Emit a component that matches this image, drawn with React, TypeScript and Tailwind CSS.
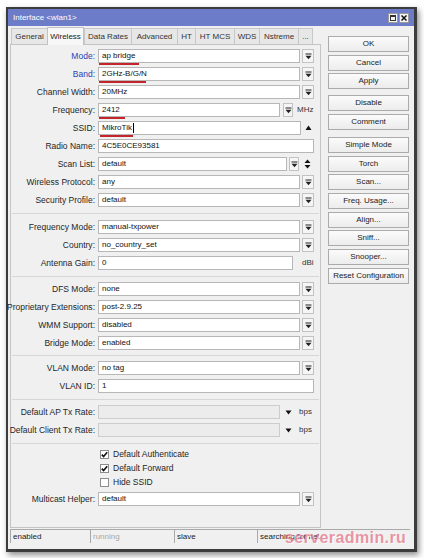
import React from 'react';

const DropIcon = () => (
  <svg width="7" height="7" viewBox="0 0 7 7">
    <rect x="0.5" y="0.5" width="6" height="1" fill="#222" />
    <path d="M0.5 2.8h6L3.5 6.2z" fill="#222" />
  </svg>
);

function Box({
  className,
  value,
  underline,
  caret,
  disabled,
}: {
  className: string;
  value?: string;
  underline?: string;
  caret?: boolean;
  disabled?: boolean;
}) {
  return (
    <div
      className={`relative flex h-[14px] shrink-0 items-center border px-[3px] text-[8px] text-[#111] ${
        disabled ? 'border-[#cdcdcd] bg-[#ececec]' : 'border-[#b7b7b7] bg-white'
      } ${className}`}
    >
      <span className="leading-none">{value}</span>
      {caret && <span className="ml-[1px] h-[10px] w-px bg-black" />}
      {underline && <div className={`absolute bottom-[-3px] h-[2px] bg-[#c4242c] ${underline}`} />}
    </div>
  );
}

function DropBtn({ className = 'ml-[2px] w-[12px]' }: { className?: string }) {
  return (
    <div className={`flex h-[14px] shrink-0 items-center justify-center border border-[#c2c2c2] bg-[#f5f5f5] ${className}`}>
      <DropIcon />
    </div>
  );
}

function Row({ label, blue, children }: { label: string; blue?: boolean; children: React.ReactNode }) {
  return (
    <div className="flex h-[18px] items-center">
      <div
        className={`flex w-[84px] shrink-0 justify-end whitespace-nowrap text-[8.5px] ${
          blue ? 'text-[#2c3fb4]' : 'text-[#262626]'
        }`}
      >
        {label}:
      </div>
      <div className="ml-[3px] flex items-center">{children}</div>
    </div>
  );
}

function Select({ label, value, blue, underline }: { label: string; value: string; blue?: boolean; underline?: string }) {
  return (
    <Row label={label} blue={blue}>
      <Box className="w-[202px]" value={value} underline={underline} />
      <DropBtn />
    </Row>
  );
}

function Sep({ className }: { className: string }) {
  return (
    <div className={`flex items-center px-[1px] ${className}`}>
      <div className="h-px w-full bg-[#d6d6d6]" />
    </div>
  );
}

function Check({ label, checked }: { label: string; checked?: boolean }) {
  return (
    <div className="flex h-[14px] items-center pl-[89px]">
      <div className="flex h-[9px] w-[9px] items-center justify-center border border-[#8d8d8d] bg-white">
        {checked && (
          <svg width="7" height="7" viewBox="0 0 7 7">
            <path d="M0.8 3.6l1.8 1.9L6.2 1.2" stroke="#111" strokeWidth="1.6" fill="none" />
          </svg>
        )}
      </div>
      <span className="ml-[4px] text-[8.5px] text-[#262626]">{label}</span>
    </div>
  );
}

function Btn({ label }: { label: string }) {
  return (
    <div className="flex h-[16px] items-center justify-center border border-[#ababab] bg-linear-to-b from-[#fbfbfb] to-[#ececec] text-[8px] text-[#222]">
      {label}
    </div>
  );
}

const tabs = [
  { label: 'General', w: 'w-[36px]' },
  { label: 'Wireless', w: 'w-[37px]', active: true },
  { label: 'Data Rates', w: 'w-[47px]' },
  { label: 'Advanced', w: 'w-[46px]' },
  { label: 'HT', w: 'w-[18px]' },
  { label: 'HT MCS', w: 'w-[39px]' },
  { label: 'WDS', w: 'w-[25px]' },
  { label: 'Nstreme', w: 'w-[39px]' },
  { label: '...', w: 'w-[15px]', dim: true },
];

export default function App() {
  return (
    <div className="h-[558px] w-[424px] overflow-hidden bg-white pl-[6px] pt-[7px] font-['Liberation_Sans',Arial,sans-serif]">
      <div className="flex h-[545px] w-[411px] flex-col border-b-[3px] border-l-2 border-r-[3px] border-t-2 border-[#3c3c3c] bg-[#f0f0f0] shadow-[2px_3px_6px_rgba(0,0,0,0.45)]">
        {/* title bar */}
        <div className="flex h-[17px] shrink-0 items-center bg-[#6d7cc9] pl-[5px] pr-[5px]">
          <span className="text-[8px] text-white">Interface &lt;wlan1&gt;</span>
          <div className="ml-auto flex gap-[1px]">
            <div className="h-[10px] w-[10px] border border-[#9a9a9a] bg-[#f4f4f4] p-[1px]">
              <div className="h-full w-full border border-t-2 border-[#333]" />
            </div>
            <div className="flex h-[10px] w-[10px] items-center justify-center border border-[#9a9a9a] bg-[#f4f4f4]">
              <svg width="6" height="6" viewBox="0 0 6 6">
                <path d="M0.5 0.5l5 5M5.5 0.5l-5 5" stroke="#111" strokeWidth="1.5" />
              </svg>
            </div>
          </div>
        </div>

        {/* body */}
        <div className="flex flex-1 flex-col">
          <div className="flex">
            {/* left column */}
            <div className="ml-[2px] w-[311px]">
              <div className="flex h-[18px] items-end pl-[1px]">
                {tabs.map((t, i) => (
                  <div
                    key={t.label}
                    className={`flex shrink-0 items-center justify-center border-l border-t text-[8px] ${t.w} ${
                      i === tabs.length - 1 ? 'border-r' : ''
                    } ${
                      t.active
                        ? 'relative z-10 -mb-px h-[18px] border-r border-[#c2c2c2] bg-[#f7f7f7] text-[#222]'
                        : 'h-[16px] border-[#c8c8c8] bg-[#e7e7e7] text-[#333]'
                    } ${t.dim ? 'text-[#9a9a9a]' : ''}`}
                  >
                    {t.label}
                  </div>
                ))}
              </div>

              <div className="h-[484px] border border-[#c4c4c4] pt-[2px]">
                <Select label="Mode" value="ap bridge" blue underline="left-0 w-[40px]" />
                <Select label="Band" value="2GHz-B/G/N" blue underline="left-0 w-[47px]" />
                <Select label="Channel Width" value="20MHz" />
                <Row label="Frequency">
                  <Box className="w-[182px]" value="2412" underline="left-0 w-[26px]" />
                  <DropBtn className="ml-[3px] w-[10px]" />
                  <span className="ml-[4px] text-[8px] text-[#333]">MHz</span>
                </Row>
                <Row label="SSID">
                  <Box className="w-[203px]" value="MikroTik" caret underline="left-[1px] w-[33px]" />
                  <svg className="ml-[4px]" width="7" height="6" viewBox="0 0 7 6">
                    <path d="M3.5 0.5L6.5 5H0.5z" fill="#111" />
                  </svg>
                </Row>
                <Row label="Radio Name">
                  <Box className="w-[216px]" value="4C5E0CE93581" />
                </Row>
                <Row label="Scan List">
                  <Box className="w-[189px]" value="default" />
                  <DropBtn className="ml-[2px] w-[10px]" />
                  <svg className="ml-[5px]" width="7" height="10" viewBox="0 0 7 10">
                    <path d="M3.5 0.5L6.5 4H0.5zM3.5 9.5L6.5 6H0.5z" fill="#111" />
                  </svg>
                </Row>
                <Select label="Wireless Protocol" value="any" />
                <Select label="Security Profile" value="default" />
                <Sep className="h-[9px]" />
                <Select label="Frequency Mode" value="manual-txpower" />
                <Select label="Country" value="no_country_set" />
                <Row label="Antenna Gain">
                  <Box className="w-[195px]" value="0" />
                  <span className="ml-[9px] text-[8px] text-[#333]">dBi</span>
                </Row>
                <Sep className="h-[8px]" />
                <Select label="DFS Mode" value="none" />
                <Select label="Proprietary Extensions" value="post-2.9.25" />
                <Select label="WMM Support" value="disabled" />
                <Select label="Bridge Mode" value="enabled" />
                <Sep className="h-[7px]" />
                <Select label="VLAN Mode" value="no tag" />
                <Row label="VLAN ID">
                  <Box className="w-[216px]" value="1" />
                </Row>
                <Sep className="h-[8px]" />
                <Row label="Default AP Tx Rate">
                  <Box className="w-[182px]" disabled />
                  <svg className="ml-[5px]" width="7" height="5" viewBox="0 0 7 5">
                    <path d="M0.5 0.5h6L3.5 4.5z" fill="#111" />
                  </svg>
                  <span className="ml-[7px] text-[8px] text-[#333]">bps</span>
                </Row>
                <Row label="Default Client Tx Rate">
                  <Box className="w-[182px]" disabled />
                  <svg className="ml-[5px]" width="7" height="5" viewBox="0 0 7 5">
                    <path d="M0.5 0.5h6L3.5 4.5z" fill="#111" />
                  </svg>
                  <span className="ml-[7px] text-[8px] text-[#333]">bps</span>
                </Row>
                <Sep className="h-[8px]" />
                <Check label="Default Authenticate" checked />
                <Check label="Default Forward" checked />
                <Check label="Hide SSID" />
                <div className="mt-[1px]">
                  <Select label="Multicast Helper" value="default" />
                </div>
              </div>
            </div>

            {/* right column */}
            <div className="ml-[7px] flex w-[81px] flex-col pt-[10px]">
              <div className="flex flex-col gap-[2.7px]">
                <Btn label="OK" />
                <Btn label="Cancel" />
                <Btn label="Apply" />
              </div>
              <div className="mt-[5.6px] flex flex-col gap-[2.7px]">
                <Btn label="Disable" />
                <Btn label="Comment" />
              </div>
              <div className="mt-[7.3px] flex flex-col gap-[2.7px]">
                <Btn label="Simple Mode" />
                <Btn label="Torch" />
                <Btn label="Scan..." />
                <Btn label="Freq. Usage..." />
                <Btn label="Align..." />
                <Btn label="Sniff..." />
                <Btn label="Snooper..." />
                <Btn label="Reset Configuration" />
              </div>
            </div>
          </div>

          {/* status bar */}
          <div className="ml-[2px] mt-px flex h-[14px] w-[400px] text-[8px]">
            <div className="flex w-[80px] items-center border-l border-t border-[#a9a9a9] pl-[2px] text-[#222]">enabled</div>
            <div className="flex w-[84px] items-center border-l border-t border-[#a9a9a9] pl-[2px] text-[#a8a8a8]">running</div>
            <div className="flex w-[83px] items-center border-l border-t border-[#a9a9a9] pl-[2px] text-[#222]">slave</div>
            <div className="relative flex w-[153px] items-center border-l border-t border-[#a9a9a9] pl-[2px] text-[#222]">
              searching for net
              <span className="absolute left-[27px] top-[-4px] whitespace-nowrap text-[16px] font-bold tracking-[0.4px] text-[#e0506c]/60 [text-shadow:1px_1px_0_rgba(255,255,255,0.7)]">
                serveradmin.ru
              </span>
            </div>
          </div>
        </div>
      </div>
    </div>
  );
}
